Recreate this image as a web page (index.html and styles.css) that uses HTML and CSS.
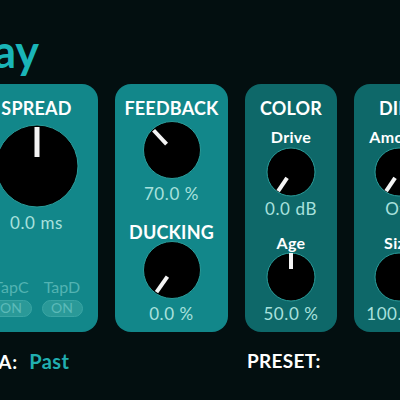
FILE: index.html
```html
<!DOCTYPE html>
<html>
<head>
<meta charset="utf-8">
<link rel="stylesheet" href="styles.css">
</head>
<body>
<div class="app">
  <h1 class="title">Delay</h1>
  <div class="panels">
    <section class="panel light p1">
      <div class="label big">SPREAD</div>
      <svg class="knob k-lg" viewBox="-42 -42 84 84" width="84" height="84">
        <circle r="41" class="disc"/>
        <line x1="0" y1="-9" x2="0" y2="-39" class="ptr wide"/>
      </svg>
      <div class="value v-spread">0.0 ms</div>
      <div class="taps">
        <div class="tap"><span class="tap-name">TapC</span><span class="pill">ON</span></div>
        <div class="tap"><span class="tap-name">TapD</span><span class="pill">ON</span></div>
      </div>
    </section>

    <section class="panel light p2">
      <div class="label big">FEEDBACK</div>
      <svg class="knob k-md k-first" viewBox="-30 -30 60 60" width="60" height="60">
        <circle r="28.5" class="disc"/>
        <line x1="0" y1="-8" x2="0" y2="-27" class="ptr" transform="rotate(-43)"/>
      </svg>
      <div class="value v-md">70.0 %</div>
      <div class="label big second">DUCKING</div>
      <svg class="knob k-md k-second" viewBox="-30 -30 60 60" width="60" height="60">
        <circle r="28.5" class="disc"/>
        <line x1="0" y1="-8" x2="0" y2="-27" class="ptr" transform="rotate(-145)"/>
      </svg>
      <div class="value v-md">0.0 %</div>
    </section>

    <section class="panel dark p3">
      <div class="label big">COLOR</div>
      <div class="label small">Drive</div>
      <svg class="knob k-sm" viewBox="-25 -25 50 50" width="50" height="50">
        <circle r="24" class="disc"/>
        <line x1="0" y1="-7" x2="0" y2="-23" class="ptr" transform="rotate(-146)"/>
      </svg>
      <div class="value v-sm">0.0 dB</div>
      <div class="label small second-sm">Age</div>
      <svg class="knob k-sm overlap" viewBox="-25 -25 50 50" width="50" height="50">
        <circle r="24" class="disc"/>
        <line x1="0" y1="-8" x2="0" y2="-24" class="ptr"/>
      </svg>
      <div class="value v-sm">50.0 %</div>
    </section>

    <section class="panel dark p4">
      <div class="label big">DIFF</div>
      <div class="label small">Amount</div>
      <svg class="knob k-sm" viewBox="-25 -25 50 50" width="50" height="50">
        <circle r="24" class="disc"/>
        <line x1="0" y1="-7" x2="0" y2="-23" class="ptr" transform="rotate(-146)"/>
      </svg>
      <div class="value v-sm">Off</div>
      <div class="label small second-sm">Size</div>
      <svg class="knob k-sm overlap" viewBox="-25 -25 50 50" width="50" height="50">
        <circle r="24" class="disc"/>
        <line x1="0" y1="-7" x2="0" y2="-23" class="ptr" transform="rotate(146)"/>
      </svg>
      <div class="value v-sm">100.0 %</div>
    </section>
  </div>
  <div class="footer">
    <div class="era"><span class="f-label">ERA:</span><span class="f-val">Past</span></div>
    <div class="preset"><span class="f-label">PRESET:</span></div>
  </div>
</div>
</body>
</html>
```

FILE: styles.css
```css
html, body {
  margin: 0;
  padding: 0;
  background: #030f10;
  overflow: hidden;
  width: 400px;
  height: 400px;
}

.app {
  font-family: "Lato", "Noto Sans", sans-serif;
  color: #fff;
  display: flex;
  flex-direction: column;
}

.title {
  margin: 24px 0 0 -76px;
  height: 60px;
  font-size: 45px;
  line-height: 54px;
  font-weight: 700;
  color: #1ab5b8;
  letter-spacing: 0;
}

.panels {
  display: flex;
  gap: 17px;
  margin-left: -25px;
  height: 248px;
}

.panel {
  flex: none;
  border-radius: 16px;
  display: flex;
  flex-direction: column;
  align-items: center;
  box-sizing: border-box;
  padding-top: 14px;
}

.light { background: #12878a; }
.dark { background: #0e6869; }

.p1 { width: 123px; }
.p2 { width: 113px; }
.p3 { width: 92px; }
.p4 { width: 90px; }

.label {
  font-weight: 700;
  color: #fff;
  white-space: nowrap;
}

.big {
  font-size: 18px;
  line-height: 20px;
  letter-spacing: 0.2px;
}

.small {
  font-size: 16px;
  line-height: 20px;
  margin-top: 9px;
  letter-spacing: 0.3px;
}

.value {
  font-size: 17px;
  line-height: 20px;
  letter-spacing: 0.6px;
  color: #a9e1dd;
  white-space: nowrap;
}

.knob { display: block; flex: none; }
.disc { fill: #000; stroke: #2a9c9a; stroke-width: 1; }
.ptr { stroke: #f4f4f4; stroke-width: 4; stroke-linecap: butt; }
.ptr.wide { stroke-width: 5; }

/* panel 1 */
.k-lg { margin-top: 6px; }
.v-spread { margin-top: 5px; }

.taps {
  margin-top: 45px;
  display: flex;
  gap: 10px;
}
.tap {
  display: flex;
  flex-direction: column;
  align-items: center;
  gap: 4px;
}
.tap-name {
  font-size: 16px;
  line-height: 18px;
  color: #52b3b2;
}
.pill {
  width: 41px;
  height: 17px;
  box-sizing: border-box;
  border-radius: 9px;
  border: 1.5px solid #3aa5a4;
  background: #2a9998;
  color: #5cbab8;
  font-size: 14px;
  line-height: 14px;
  text-align: center;
}

/* panel 2 */
.k-first { margin-top: 2px; }
.v-md { margin-top: 4px; }
.second { margin-top: 18px; }
.k-second { margin-top: -2px; }

/* panel 3 / 4 */
.k-sm { margin-top: 0; }
.v-sm { margin-top: 2px; }
.second-sm { margin-top: 14px; position: relative; z-index: 1; }
.overlap { margin-top: -1px; }

.footer {
  display: grid;
  grid-template-columns: 274px 1fr;
  margin-left: -27px;
  margin-top: 17px;
  font-size: 19px;
  line-height: 24px;
}
.f-label { font-weight: 700; color: #fff; letter-spacing: 1px; }
.f-val { color: #21aeb0; font-weight: 700; margin-left: 11px; font-size: 20px; letter-spacing: 0.4px; }
.preset .f-label { letter-spacing: 0.3px; }
```
